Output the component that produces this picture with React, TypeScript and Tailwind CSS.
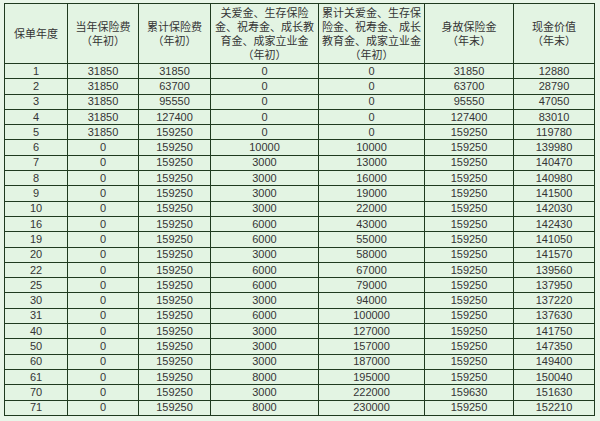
const rows: (string | number)[][] = [
  [1, 31850, 31850, 0, 0, 31850, 12880],
  [2, 31850, 63700, 0, 0, 63700, 28790],
  [3, 31850, 95550, 0, 0, 95550, 47050],
  [4, 31850, 127400, 0, 0, 127400, 83010],
  [5, 31850, 159250, 0, 0, 159250, 119780],
  [6, 0, 159250, 10000, 10000, 159250, 139980],
  [7, 0, 159250, 3000, 13000, 159250, 140470],
  [8, 0, 159250, 3000, 16000, 159250, 140980],
  [9, 0, 159250, 3000, 19000, 159250, 141500],
  [10, 0, 159250, 3000, 22000, 159250, 142030],
  [16, 0, 159250, 6000, 43000, 159250, 142430],
  [19, 0, 159250, 6000, 55000, 159250, 141050],
  [20, 0, 159250, 3000, 58000, 159250, 141570],
  [22, 0, 159250, 6000, 67000, 159250, 139560],
  [25, 0, 159250, 6000, 79000, 159250, 137950],
  [30, 0, 159250, 3000, 94000, 159250, 137220],
  [31, 0, 159250, 6000, 100000, 159250, 137630],
  [40, 0, 159250, 3000, 127000, 159250, 141750],
  [50, 0, 159250, 3000, 157000, 159250, 147350],
  [60, 0, 159250, 3000, 187000, 159250, 149400],
  [61, 0, 159250, 8000, 195000, 159250, 150040],
  [70, 0, 159250, 3000, 222000, 159630, 151630],
  [71, 0, 159250, 8000, 230000, 159250, 152210],
];

// column widths measured off the screenshot
const widths = [63, 71, 72, 108, 106, 89, 81];

const th = "border border-[#1f3a1f] font-normal text-center align-middle leading-[14px] p-0";
const td = "border border-[#1f3a1f] text-center align-middle p-0 leading-none";

export default function App() {
  return (
    <div
      className="w-[600px] h-[421px] bg-[#e9f6e9] pt-[3px] pl-[4px] text-[#353535]"
      style={{ fontFamily: '"Liberation Sans", "Noto Sans CJK SC", sans-serif' }}
    >
      <table className="table-fixed border-collapse bg-[#e3f4e3] w-[590px] text-[11px]">
        <colgroup>
          {widths.map((w, i) => (
            <col key={i} style={{ width: w }} />
          ))}
        </colgroup>
        <thead>
          <tr className="h-[60px]">
            <th className={th}>保单年度</th>
            <th className={th}>
              当年保险费
              <br />
              （年初）
            </th>
            <th className={th}>
              累计保险费
              <br />
              （年初）
            </th>
            <th className={th}>
              关爱金、生存保险
              <br />
              金、祝寿金、成长教
              <br />
              育金、成家立业金
              <br />
              （年初）
            </th>
            <th className={th}>
              累计关爱金、生存保
              <br />
              险金、祝寿金、成长
              <br />
              教育金、成家立业金
              <br />
              （年初）
            </th>
            <th className={th}>
              身故保险金
              <br />
              （年末）
            </th>
            <th className={th}>
              现金价值
              <br />
              （年末）
            </th>
          </tr>
        </thead>
        <tbody>
          {rows.map((r) => (
            <tr key={r[0]} className="h-[15.3px]">
              {r.map((v, i) => (
                <td key={i} className={td}>
                  {v}
                </td>
              ))}
            </tr>
          ))}
        </tbody>
      </table>
    </div>
  );
}
